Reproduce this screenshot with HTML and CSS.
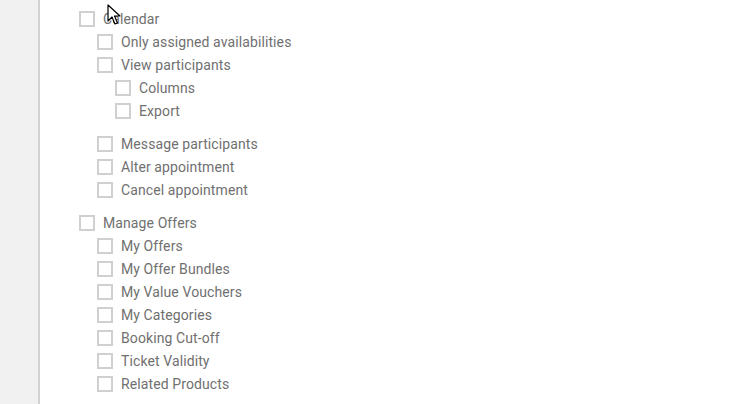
FILE: index.html
```html
<!DOCTYPE html>
<html lang="en">
<head>
	<meta charset="UTF-8">
	<title>Permissions</title>
	<link rel="stylesheet" href="styles.css">
</head>
<body>
	<div class="page">
		<div class="side"></div>
		<div class="main">
			<ul class="tree">
				<li>
					<label class="item"><span class="box"></span>Calendar</label>
					<ul>
						<li><label class="item"><span class="box"></span>Only assigned availabilities</label></li>
						<li>
							<label class="item"><span class="box"></span>View participants</label>
							<ul>
								<li><label class="item"><span class="box"></span>Columns</label></li>
								<li><label class="item"><span class="box"></span>Export</label></li>
							</ul>
						</li>
						<li><label class="item"><span class="box"></span>Message participants</label></li>
						<li><label class="item"><span class="box"></span>Alter appointment</label></li>
						<li><label class="item"><span class="box"></span>Cancel appointment</label></li>
					</ul>
				</li>
				<li>
					<label class="item"><span class="box"></span>Manage Offers</label>
					<ul>
						<li><label class="item"><span class="box"></span>My Offers</label></li>
						<li><label class="item"><span class="box"></span>My Offer Bundles</label></li>
						<li><label class="item"><span class="box"></span>My Value Vouchers</label></li>
						<li><label class="item"><span class="box"></span>My Categories</label></li>
						<li><label class="item"><span class="box"></span>Booking Cut-off</label></li>
						<li><label class="item"><span class="box"></span>Ticket Validity</label></li>
						<li><label class="item"><span class="box"></span>Related Products</label></li>
					</ul>
				</li>
			</ul>
		</div>
	</div>
	<svg class="cursor" width="14" height="22" viewBox="0 0 14 22">
		<path d="M1 1 L1 17 L5 13 L8 20 L10.5 19 L7.5 12 L13 12 Z" fill="#fff" stroke="#000" stroke-width="1.2" stroke-linejoin="round"/>
	</svg>
</body>
</html>
```

FILE: styles.css
```css
body{
	margin:0;
	background-color:#fff;
	font-family:Roboto, "Liberation Sans", sans-serif;
	font-size:14px;
	letter-spacing:0.1px;
	color:#707070;
}
.page{
	display:flex;
	height:404px;
	overflow:hidden;
}
.side{
	width:38px;
	flex-shrink:0;
	background-color:#f1f1f1;
	border-right:2px solid #d2d2d2;
}
.main{
	flex:1;
	padding:7px 0 0 39px;
}
.tree,
.tree ul{
	list-style:none;
	margin:0;
	padding:0;
}
.tree ul{
	padding-left:18px;
	margin-bottom:10px;
}
.item{
	display:flex;
	align-items:center;
	gap:8px;
	height:23px;
	cursor:pointer;
}
.box{
	width:12px;
	height:12px;
	border:2px solid #d0d0d0;
	background-color:#fff;
	flex-shrink:0;
}
.cursor{
	position:absolute;
	left:107px;
	top:4px;
}
```
